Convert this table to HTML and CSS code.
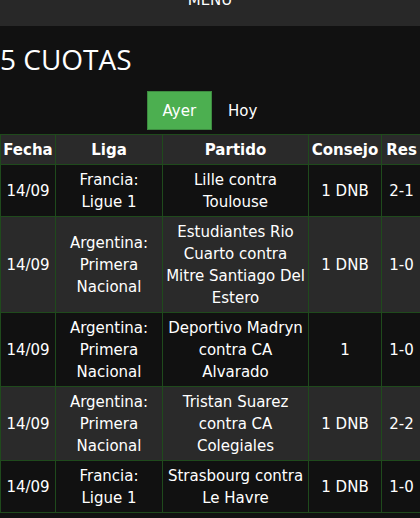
FILE: index.html
```html
<!DOCTYPE html>
<html lang="es">
<head>
<meta charset="utf-8">
<link rel="stylesheet" href="styles.css">
</head>
<body>
<div class="menu"><span class="menu-text">MENU</span></div>
<h1 class="title">5 CUOTAS</h1>
<div class="tabs">
  <span class="tab active">Ayer</span>
  <span class="tab">Hoy</span>
</div>
<table class="odds">
  <colgroup>
    <col class="c-fecha"><col class="c-liga"><col class="c-partido"><col class="c-consejo"><col class="c-res">
  </colgroup>
  <thead>
    <tr><th>Fecha</th><th>Liga</th><th>Partido</th><th>Consejo</th><th>Res</th></tr>
  </thead>
  <tbody>
    <tr><td>14/09</td><td>Francia: Ligue 1</td><td>Lille contra Toulouse</td><td>1 DNB</td><td>2-1</td></tr>
    <tr><td>14/09</td><td>Argentina: Primera Nacional</td><td>Estudiantes Rio Cuarto contra Mitre Santiago Del Estero</td><td>1 DNB</td><td>1-0</td></tr>
    <tr><td>14/09</td><td>Argentina: Primera Nacional</td><td>Deportivo Madryn contra CA Alvarado</td><td>1</td><td>1-0</td></tr>
    <tr><td>14/09</td><td>Argentina: Primera Nacional</td><td>Tristan Suarez contra CA Colegiales</td><td>1 DNB</td><td>2-2</td></tr>
    <tr><td>14/09</td><td>Francia: Ligue 1</td><td>Strasbourg contra Le Havre</td><td>1 DNB</td><td>1-0</td></tr>
  </tbody>
</table>
</body>
</html>
```
FILE: styles.css
```css
html, body {
  margin: 0;
  padding: 0;
  background: #111111;
  color: #ffffff;
  font-family: "DejaVu Sans", Verdana, sans-serif;
  font-size: 15px;
  line-height: 22px;
  overflow: hidden;
}
.menu {
  height: 26px;
  background: #282828;
  text-align: center;
  overflow: hidden;
}
.menu-text {
  display: block;
  margin-top: -11px;
}
.title {
  font-family: "Open Sans", sans-serif;
  font-weight: 400;
  font-size: 28px;
  line-height: 38px;
  margin: 14px 0 13px 0;
}
.tabs {
  display: flex;
  justify-content: center;
  margin-bottom: 4px;
}
.tab {
  padding: 8px 15px 7px;
  border: 1px solid transparent;
}
.tab.active {
  background: #4caf50;
  border-color: #3d8b40;
}
.odds {
  border-collapse: collapse;
  table-layout: fixed;
  width: 421px;
  margin-left: 0;
}
.c-fecha { width: 55px; }
.c-liga { width: 107px; }
.c-partido { width: 146px; }
.c-consejo { width: 73px; }
.c-res { width: 40px; }
.odds th, .odds td {
  border: 1px solid #1f4a1c;
  padding: 4px 2px 3px;
  text-align: center;
  vertical-align: middle;
}
.odds th {
  background: #2a2a2a;
  font-weight: bold;
}
.odds tbody tr:nth-child(odd) td { background: #111111; }
.odds tbody tr:nth-child(even) td { background: #2a2a2a; }
```
